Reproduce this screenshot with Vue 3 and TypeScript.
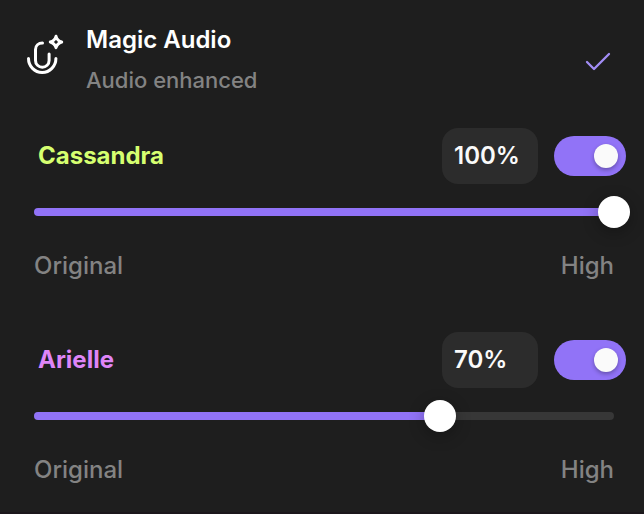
<script setup lang="ts">
import { reactive } from 'vue'

interface Speaker {
  id: string
  name: string
  color: string
  level: number
  enabled: boolean
}

const speakers = reactive<Speaker[]>([
  { id: 'cassandra', name: 'Cassandra', color: '#d6ff70', level: 100, enabled: true },
  { id: 'arielle', name: 'Arielle', color: '#de85f7', level: 70, enabled: true },
])

function setLevel(speaker: Speaker, event: Event) {
  const value = parseInt((event.target as HTMLInputElement).value, 10)
  speaker.level = Number.isNaN(value) ? 0 : Math.min(100, Math.max(0, value))
}
</script>

<template>
  <main class="panel">
    <header class="header">
      <svg class="mic" viewBox="0 0 40 44" aria-hidden="true">
        <path d="M16.500 11C12.500 11 9.500 13.500 9.500 17.500V28.500a6.800 6.800 0 0 0 13.600 0V22" />
        <path d="M2.500 26.500a13.700 14 0 0 0 27.400 0" />
        <path d="M30 4.300c.9 3.200 2.500 4.800 5.700 5.700-3.200.9-4.800 2.500-5.700 5.700-.9-3.200-2.500-4.800-5.700-5.700 3.200-.9 4.800-2.500 5.700-5.700Z" />
      </svg>
      <div class="heading">
        <h1 class="title">Magic Audio</h1>
        <p class="subtitle">Audio enhanced</p>
      </div>
      <svg class="check" viewBox="0 0 28 20" aria-hidden="true">
        <path d="M3 12l7 7L25 4" />
      </svg>
    </header>

    <section v-for="speaker in speakers" :key="speaker.id" class="speaker">
      <div class="row">
        <h2 class="name" :style="{ color: speaker.color }">{{ speaker.name }}</h2>
        <input
          class="amount"
          type="text"
          :value="speaker.level + '%'"
          :aria-label="speaker.name + ' level'"
          @change="setLevel(speaker, $event)"
        />
        <input
          v-model="speaker.enabled"
          class="switch"
          type="checkbox"
          role="switch"
          :aria-label="'Enhance ' + speaker.name"
        />
      </div>
      <div class="slider">
        <div class="rail">
          <div class="fill" :style="{ width: speaker.level + '%' }"></div>
        </div>
        <input
          class="range"
          type="range"
          min="0"
          max="100"
          :value="speaker.level"
          :aria-label="speaker.name + ' enhancement'"
          @input="setLevel(speaker, $event)"
        />
      </div>
      <div class="scale">
        <span>Original</span>
        <span>High</span>
      </div>
    </section>
  </main>
</template>

<style>
body {
  background: #1e1e1e;
}
</style>

<style scoped>
.panel {
  box-sizing: border-box;
  min-height: 100vh;
  padding: 24px 14px 0 18px;
  background: #1e1e1e;
  border-bottom: 2px solid #1b171b;
  color: #fff;
  font-family: Inter, sans-serif;
  font-size: 24px;
  line-height: 32px;
}

.header {
  display: flex;
  align-items: center;
  padding: 0 18px 0 8px;
}

.mic {
  flex: none;
  width: 40px;
  height: 44px;
  margin-right: 20px;
  align-self: flex-start;
  margin-top: 8px;
  fill: none;
  stroke: #fff;
  stroke-width: 3;
  stroke-linecap: round;
  stroke-linejoin: round;
}

.heading {
  flex: 1;
}

.title,
.subtitle,
.name {
  margin: 0;
}

.title {
  font-size: 24px;
  font-weight: 600;
}

.subtitle {
  margin-top: 8px;
  color: #838383;
  font-size: 22px;
  font-weight: 500;
}

.check {
  overflow: visible;
  width: 28px;
  height: 20px;
  fill: none;
  stroke: #a28df5;
  stroke-width: 2.3;
  stroke-linecap: round;
  stroke-linejoin: round;
}

.speaker {
  padding-top: 32px;
  margin-bottom: 18px;
}

.row {
  display: flex;
  align-items: center;
  gap: 16px;
  padding: 0 4px 0 20px;
}

.name {
  flex: 1;
  font-size: 24px;
  font-weight: 700;
}

.amount {
  box-sizing: border-box;
  width: 96px;
  height: 56px;
  padding: 0 12px 2px;
  border: 0;
  border-radius: 16px;
  background: #2c2c2c;
  color: #fafafa;
  font: 600 24px Inter, sans-serif;
}

.switch {
  display: flex;
  align-items: center;
  justify-content: flex-end;
  width: 72px;
  height: 40px;
  margin: 0;
  padding: 0 8px;
  box-sizing: border-box;
  appearance: none;
  border-radius: 20px;
  background: #444;
  cursor: pointer;
}

.switch:not(:checked) {
  justify-content: flex-start;
}

.switch:checked {
  background: #9173f7;
}

.switch::before {
  content: '';
  width: 24px;
  height: 24px;
  border-radius: 50%;
  background: #fafafa;
  box-shadow: 0 2px 4px rgba(0, 0, 0, 0.3);
}

.slider {
  display: grid;
  align-items: center;
  margin-top: 12px;
}

.rail,
.range {
  grid-area: 1 / 1;
}

.rail {
  height: 8px;
  margin: 0 16px;
  overflow: hidden;
  border-radius: 4px;
  background: #373737;
}

.fill {
  height: 100%;
  background: #9173f7;
}

.range {
  width: 100%;
  height: 32px;
  margin: 0;
  appearance: none;
  background: transparent;
  cursor: pointer;
}

.range::-webkit-slider-thumb {
  appearance: none;
  width: 32px;
  height: 32px;
  border: 0;
  border-radius: 50%;
  background: #fff;
  box-shadow: 0 4px 16px rgba(0, 0, 0, 0.3);
}

.scale {
  display: flex;
  justify-content: space-between;
  margin-top: 20px;
  padding: 2px 16px 0;
  color: #838383;
  font-weight: 500;
}
</style>
